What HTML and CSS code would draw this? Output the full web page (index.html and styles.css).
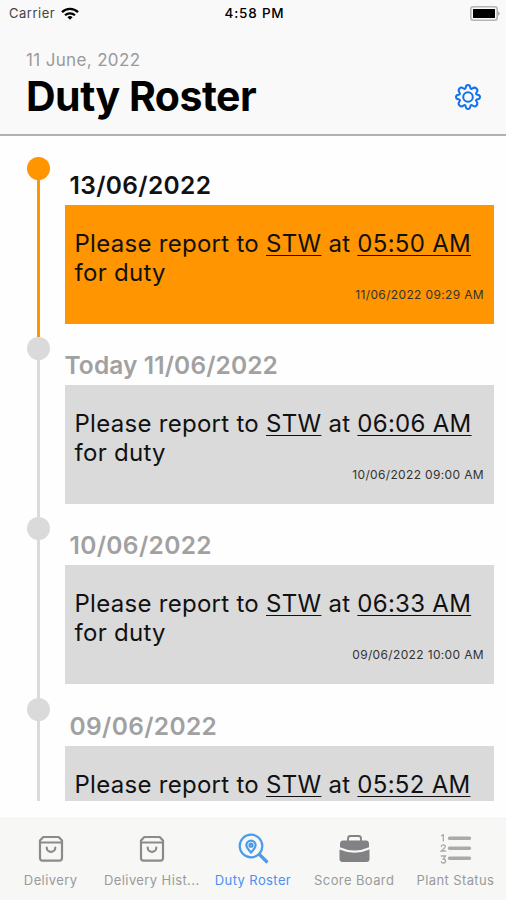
FILE: index.html
```html
<!DOCTYPE html>
<html lang="en">
<head>
    <meta charset="UTF-8">
    <title>Duty Roster</title>
    <link rel="stylesheet" href="styles.css">
</head>
<body>
<header class="header">
    <div class="status">
        <div class="carrier">
            <span>Carrier</span>
            <svg class="wifi" width="18" height="13" viewBox="0 0 18 13" fill="none" stroke="#000" stroke-width="2.2">
                <path d="M1 5.1a11.4 11.4 0 0 1 16 0"/>
                <path d="M4 8.3a7.2 7.2 0 0 1 10 0"/>
                <path d="M9 12.8 6.4 10.3a3.7 3.7 0 0 1 5.2 0z" fill="#000" stroke="none"/>
            </svg>
        </div>
        <div class="time">4:58 PM</div>
        <svg class="battery" width="30" height="15" viewBox="0 0 30 15">
            <rect x=".8" y=".8" width="26.4" height="13.4" rx="2.5" fill="#f9f9f9" stroke="#b5b5b5" stroke-width="1.6"/>
            <rect x="3" y="3" width="22" height="9" rx=".6"/>
            <path d="M28 5l2 2.5-2 2.5z" fill="#aaa"/>
        </svg>
    </div>
    <div class="title-bar">
        <div>
            <div class="today">11 June, 2022</div>
            <h1>Duty Roster</h1>
        </div>
        <svg class="gear" width="26" height="26" viewBox="0 0 26 26" fill="none" stroke="#0f72f0" stroke-width="2" stroke-linejoin="round">
            <path d="M10.7 3.5Q11 1 13 1t2.3 2.5l.3 1.1 1 .4 1-.6q2-1.6 3.9.1t.1 3.9l-.6 1 .4 1 1.1.3Q25 11 25 13t-2.5 2.3l-1.1.3-.4 1 .6 1q1.6 2-.1 3.9t-3.9.1l-1-.6-1 .4-.3 1.1Q15 25 13 25t-2.3-2.5l-.3-1.1-1-.4-1 .6q-2 1.6-3.9-.1t-.1-3.9l.6-1-.4-1-1.1-.3Q1 15 1 13t2.5-2.3l1.1-.3.4-1-.6-1q-1.6-2 .1-3.9t3.9-.1l1 .6 1-.4z"/>
            <circle cx="13" cy="13" r="4.8"/>
        </svg>
    </div>
</header>
<main class="roster">
    <section class="row active">
        <div class="line"></div>
        <div class="duty">
            <h2>13/06/2022</h2>
            <div class="card">
                <p>Please report to <u>STW</u> at <u>05:50 AM</u> for duty</p>
                <div class="sent">11/06/2022 09:29 AM</div>
            </div>
        </div>
    </section>
    <section class="row now">
        <div class="line"></div>
        <div class="duty">
            <h2>Today 11/06/2022</h2>
            <div class="card">
                <p>Please report to <u>STW</u> at <u>06:06 AM</u> for duty</p>
                <div class="sent">10/06/2022 09:00 AM</div>
            </div>
        </div>
    </section>
    <section class="row">
        <div class="line"></div>
        <div class="duty">
            <h2>10/06/2022</h2>
            <div class="card">
                <p>Please report to <u>STW</u> at <u>06:33 AM</u> for duty</p>
                <div class="sent">09/06/2022 10:00 AM</div>
            </div>
        </div>
    </section>
    <section class="row">
        <div class="line"></div>
        <div class="duty">
            <h2>09/06/2022</h2>
            <div class="card">
                <p>Please report to <u>STW</u> at <u>05:52 AM</u></p>
            </div>
        </div>
    </section>
</main>
<nav class="tabs">
    <div class="tab">
        <svg width="34" height="34" viewBox="0 0 34 34" fill="none" stroke="#8b8b8c" stroke-width="2.2" stroke-linecap="round" stroke-linejoin="round">
            <path d="M9.3 5h15.4l3.3 3.6v17.4a2.6 2.6 0 0 1-2.6 2.6H8.6A2.6 2.6 0 0 1 6 26V8.6z"/>
            <path d="M6 10.5h22M12.7 15.5a4.3 4.3 0 0 0 8.6 0"/>
        </svg>
        <span>Delivery</span>
    </div>
    <div class="tab">
        <svg width="34" height="34" viewBox="0 0 34 34" fill="none" stroke="#8b8b8c" stroke-width="2.2" stroke-linecap="round" stroke-linejoin="round">
            <path d="M9.3 5h15.4l3.3 3.6v17.4a2.6 2.6 0 0 1-2.6 2.6H8.6A2.6 2.6 0 0 1 6 26V8.6z"/>
            <path d="M6 10.5h22M12.7 15.5a4.3 4.3 0 0 0 8.6 0"/>
        </svg>
        <span>Delivery Hist...</span>
    </div>
    <div class="tab on">
        <svg width="34" height="34" viewBox="0 0 34 34" fill="none" stroke="#4b9bea" stroke-width="2.2">
            <circle cx="15" cy="14" r="11.3"/>
            <path d="M23 22l8.5 8.5" stroke-width="3.2"/>
            <path d="M15 20.5c-3-3.3-4.6-5-4.6-7.3a4.6 4.6 0 0 1 9.2 0c0 2.3-1.6 4-4.6 7.3z"/>
            <circle cx="15" cy="13.2" r="1.5"/>
        </svg>
        <span>Duty Roster</span>
    </div>
    <div class="tab">
        <svg width="34" height="34" viewBox="0 0 34 34" fill="#828285">
            <path d="M11 9V6.500a2.500 2.500 0 0 1 2.500-2.500h8a2.500 2.500 0 0 1 2.500 2.500V9" fill="none" stroke="#828285" stroke-width="1.8"/>
            <path d="M6 8.500h23c2 0 3 1.500 3 3.500v3.200q-14.500 6.500-29 0V12c0-2 1-3.500 3-3.500z"/>
            <path d="M2.500 17.500q15 6.500 30 0v9.500a3 3 0 0 1-3 3h-24a3 3 0 0 1-3-3z"/>
        </svg>
        <span>Score Board</span>
    </div>
    <div class="tab">
        <svg width="34" height="34" viewBox="0 0 34 34" fill="none" stroke="#aaa" stroke-width="3.4" stroke-linecap="round">
            <path d="M11.5 6.2h20M11.5 16.3h20M11.5 26.3h20"/>
            <g stroke-width="1.3">
                <path d="M3.6 3.6 5.3 2.8V9"/>
                <path d="M3.3 14.5q.3-1.6 2-1.6 2 0 2 1.7 0 1.2-4 4.4h4.2"/>
                <path d="M3.3 24h4.2l-2.3 3q2.3 0 2.3 2t-2 2q-1.5 0-2.2-1.2"/>
            </g>
        </svg>
        <span>Plant Status</span>
    </div>
</nav>
</body>
</html>
```
FILE: styles.css
```css
*{
    box-sizing: border-box;
}
body{
    display: flex;
    flex-direction: column;
    height: 900px;
    margin: 0;
    overflow: hidden;
    font-family: Inter, "Liberation Sans", sans-serif;
    color: #111;
    background: #fefefe;
}
h1, h2, p{
    margin: 0;
}
/*顶部*/
.header{
    height: 136px;
    border-bottom: 2px solid #b0b0b0;
    background: #f9f9f9;
}
.status{
    display: grid;
    grid-template-columns: 1fr auto 1fr;
    align-items: center;
    height: 26px;
    padding: 0 6px 0 9px;
    font-size: 13px;
}
.carrier{
    display: flex;
    align-items: center;
    gap: 6px;
    color: #444;
    letter-spacing: 0.5px;
}
.time{
    font-size: 13.5px;
    font-weight: 500;
    color: #000;
    letter-spacing: 0.8px;
}
.battery{
    justify-self: end;
}
.title-bar{
    display: flex;
    justify-content: space-between;
    padding: 24px 25px 0 26px;
}
.today{
    line-height: 20px;
    font-size: 17px;
    color: #999;
    letter-spacing: 0.35px;
}
h1{
    line-height: 52px;
    font-size: 41px;
    font-weight: 700;
    color: #000;
    letter-spacing: -0.5px;
}
.gear{
    margin-top: 34px;
}
/*时间轴*/
.roster{
    height: 665px;
    padding: 21px 12px 0 27px;
    overflow: hidden;
}
.row{
    display: flex;
    gap: 14.5px;
    height: 180.2px;
}
.line{
    display: flex;
    flex-direction: column;
    align-items: center;
    width: 23px;
    color: #dadada;
}
.line::before{
    content: "";
    width: 23px;
    height: 23px;
    border-radius: 50%;
    background: currentColor;
}
.line::after{
    content: "";
    flex: 1;
    width: 2.5px;
    background: currentColor;
}
.duty{
    flex: 1;
}
h2{
    height: 48px;
    padding: 12px 0 0 5px;
    line-height: 32px;
    font-size: 24.5px;
    font-weight: 600;
    color: #a1a1a1;
    white-space: nowrap;
    letter-spacing: 0.35px;
}
.now h2{
    padding-left: 0;
    letter-spacing: 0.1px;
}
.card{
    height: 119px;
    padding: 24px 10px 0 10px;
    background: #dadada;
}
.card p{
    height: 59px;
    line-height: 29px;
    font-size: 24px;
    letter-spacing: 0.28px;
}
.card u{
    text-decoration-thickness: 1px;
    text-underline-offset: 3px;
    text-decoration-skip-ink: none;
}
.sent{
    line-height: 14px;
    font-size: 12px;
    color: #333;
    text-align: right;
    letter-spacing: 0.35px;
}
.active .line{
    color: #ff9500;
}
.active h2{
    color: #111;
}
.active .card{
    background: #ff9500;
}
/*底部菜单*/
.tabs{
    display: grid;
    grid-template-columns: repeat(5, 1fr);
    height: 81px;
    margin-top: 18px;
    padding-top: 13px;
    background: #f7f7f6;
    box-shadow: 0 -1px 1px #f1f1f1;
}
.tab{
    display: flex;
    flex-direction: column;
    align-items: center;
    font-size: 13px;
    color: #9a9a9a;
    letter-spacing: 0.4px;
    white-space: nowrap;
}
.tab span{
    margin-top: 6px;
    line-height: 16px;
}
.tab.on{
    color: #4b8ff5;
}
```
